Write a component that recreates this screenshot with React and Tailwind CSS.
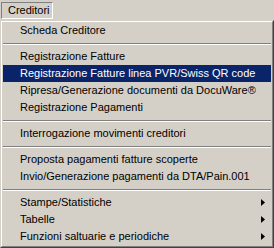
import React from "react";

const items = [
  { label: "Scheda Creditore" },
  { sep: true },
  { label: "Registrazione Fatture" },
  { label: "Registrazione Fatture linea PVR/Swiss QR code", active: true },
  { label: "Ripresa/Generazione documenti da DocuWare®" },
  { label: "Registrazione Pagamenti" },
  { sep: true },
  { label: "Interrogazione movimenti creditori" },
  { sep: true },
  { label: "Proposta pagamenti fatture scoperte" },
  { label: "Invio/Generazione pagamenti da DTA/Pain.001" },
  { sep: true },
  { label: "Stampe/Statistiche", sub: true },
  { label: "Tabelle", sub: true },
  { label: "Funzioni saltuarie e periodiche", sub: true },
];

function Arrow() {
  return (
    <svg width="4" height="7" viewBox="0 0 4 7" className="block">
      <path d="M0 0 L4 3.5 L0 7 Z" fill="#000" />
    </svg>
  );
}

export default function App() {
  return (
    <div
      className="w-[274px] h-[248px] bg-[#d4d0c8] text-black text-[11px] leading-none overflow-hidden"
      style={{ fontFamily: '"Liberation Sans", Arial, sans-serif' }}
    >
      {/* menu bar */}
      <div className="h-[20px] flex items-start">
        <div className="ml-[1px] mt-[2px] h-[17px] w-[52px] flex items-center pl-[6px] border-t border-l border-[#808080] border-r-white border-b-white border-r border-b">
          Creditori
        </div>
      </div>

      {/* dropdown */}
      <div className="h-[228px] border-t border-l border-[#d4d0c8] border-r-[#404040] border-b-[#404040] border-r border-b">
        <div className="h-full flex flex-col border-t border-l border-white border-r-[#808080] border-b-[#808080] border-r border-b">
          {items.map((it, i) =>
            it.sep ? (
              <div key={i} className="h-[9px] flex flex-col justify-center mx-[1px]">
                <div className="h-[1px] bg-[#808080]" />
                <div className="h-[1px] bg-white" />
              </div>
            ) : (
              <div
                key={i}
                className={`h-[17px] shrink-0 mx-[1px] flex items-center pl-[17px] pr-[6px] ${
                  it.active ? "bg-[#0a246a] text-white" : ""
                }`}
              >
                <span className="flex-1 whitespace-nowrap">{it.label}</span>
                {it.sub && <Arrow />}
              </div>
            )
          )}
        </div>
      </div>
    </div>
  );
}
